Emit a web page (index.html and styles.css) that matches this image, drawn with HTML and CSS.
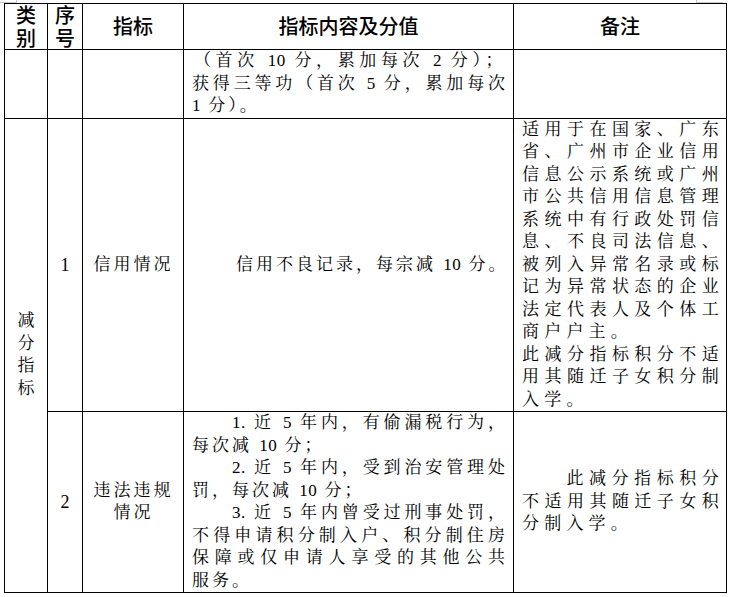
FILE: index.html
```html
<!DOCTYPE html>
<html lang="zh-CN">
<head>
<meta charset="utf-8">
<title>减分指标</title>
<link rel="stylesheet" href="styles.css">
</head>
<body>
<div class="page">
  <span class="mark mark-left"></span>
  <span class="mark mark-right"></span>
  <table class="grid">
    <colgroup>
      <col class="c-type">
      <col class="c-no">
      <col class="c-ind">
      <col class="c-content">
      <col class="c-note">
    </colgroup>
    <thead>
      <tr>
        <th class="stack-head">类别</th>
        <th class="stack-head">序号</th>
        <th>指标</th>
        <th>指标内容及分值</th>
        <th>备注</th>
      </tr>
    </thead>
    <tbody>
      <tr>
        <td></td>
        <td></td>
        <td></td>
        <td class="content">
          <p class="spread">（首次 <span class="num">10</span> 分，累加每次 <span class="num">2</span> 分）；</p>
          <p>获得三等功（首次 <span class="num">5</span> 分，累加每次 <span class="num">1</span> 分）。</p>
        </td>
        <td></td>
      </tr>
      <tr>
        <td class="type" rowspan="2">减分指标</td>
        <td class="no">1</td>
        <td class="ind">信用情况</td>
        <td class="content"><p class="indent-wide single">信用不良记录，每宗减 <span class="num">10</span> 分。</p></td>
        <td class="note">
          <p>适用于在国家、广东省、广州市企业信用信息公示系统或广州市公共信用信息管理系统中有行政处罚信息、不良司法信息、被列入异常名录或标记为异常状态的企业法定代表人及个体工商户户主。</p>
          <p>此减分指标积分不适用其随迁子女积分制入学。</p>
        </td>
      </tr>
      <tr>
        <td class="no">2</td>
        <td class="ind">违法违规情况</td>
        <td class="content">
          <p class="indent"><span class="num">1.</span> 近 <span class="num">5</span> 年内，有偷漏税行为，<span>每次减 <span class="num">10</span> 分；</span></p>
          <p class="indent"><span class="num">2.</span> 近 <span class="num">5</span> 年内，受到治安管理处<span>罚，每次减 <span class="num">10</span> 分；</span></p>
          <p class="indent"><span class="num">3.</span> 近 <span class="num">5</span> 年内曾受过刑事处罚，<span>不得申请积分制入户、积分制住房保障或仅申请人享受的其他公共</span><span class="keep">服务。</span></p>
        </td>
        <td class="note"><p class="indent-note">此减分指标积分不适用其随迁子女积分制入学。</p></td>
      </tr>
    </tbody>
  </table>
</div>
</body>
</html>
```
FILE: styles.css
```css
html, body {
  margin: 0;
  padding: 0;
  background: #ffffff;
}

.page {
  position: relative;
  padding: 3px 0 0 4px;
}

.mark {
  position: absolute;
  top: 0;
  width: 16px;
  height: 2px;
  border-bottom: 1px solid #c8c8c8;
}

.mark-left {
  left: 0;
  border-right: 1px solid #c8c8c8;
}

.mark-right {
  left: 696px;
  width: 26px;
  border-left: 1px solid #c8c8c8;
}

.grid {
  border-collapse: collapse;
  table-layout: fixed;
  width: 723px;
  color: #000;
  font-family: "Liberation Serif", "Noto Serif CJK SC", "Noto Sans CJK SC", serif;
  font-size: 17px;
  line-height: 22.5px;
}

.c-type { width: 43px; }
.c-no { width: 35px; }
.c-ind { width: 101px; }
.c-content { width: 330px; }
.c-note { width: 213px; }

.grid th,
.grid td {
  border: 1px solid #000;
  padding: 0;
  vertical-align: middle;
}

.grid th {
  font-family: "Noto Sans CJK SC", "Liberation Sans", sans-serif;
  font-weight: 500;
  font-size: 20px;
  line-height: 22.5px;
  text-align: center;
}

.grid .stack-head {
  padding: 0 2px;
}

.grid p {
  margin: 0;
}

.grid .type {
  text-align: center;
  padding: 0 5px;
}

.grid .no {
  text-align: center;
  font-size: 18px;
}

.grid .ind {
  text-align: center;
  letter-spacing: 3px;
  padding: 0 8px 0 9px;
}

.grid .content {
  letter-spacing: 3px;
  text-align: justify;
  padding: 0 5px 0 8px;
}

.grid .content .spread {
  letter-spacing: 4.6px;
  padding-left: 2px;
}

.num { letter-spacing: 0.5px; }

.indent { text-indent: 40px; }
.indent-wide { text-indent: 44px; }
.single { white-space: nowrap; }

.keep { white-space: nowrap; }

.grid .note {
  letter-spacing: 5.2px;
  text-align: justify;
  padding: 0 2px 0 8px;
}

.indent-note { text-indent: 44.4px; }
```
